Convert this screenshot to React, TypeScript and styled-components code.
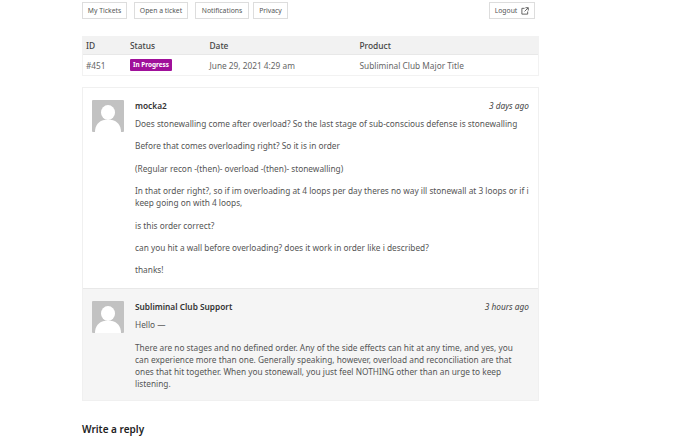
import React from "react";
import styled, { createGlobalStyle } from "styled-components";

const Global = createGlobalStyle`
  html, body { margin: 0; padding: 0; background: #fff; }
  body { font-family: "Noto Sans", sans-serif; color: #555; height: 437px; overflow: hidden; }
`;
const Page = styled.div`
  width: 457px;
  margin-left: 82px;
  padding-top: 2px;
`;
const Toolbar = styled.nav`
  display: flex;
  gap: 7px;
  height: 17px;
`;
const NavButton = styled.a<{ $width: number; $tight?: boolean }>`
  display: flex;
  align-items: center;
  justify-content: center;
  gap: 4px;
  width: ${(p) => p.$width}px;
  height: 17px;
  box-sizing: border-box;
  margin-left: ${(p) => (p.$tight ? "-3px" : "0")};
  border: 1px solid #ddd;
  background: #fff;
  font-size: 6.8px;
  color: #555;
`;
const LogoutButton = styled(NavButton)`
  margin-left: auto;
  margin-right: 4px;
`;
const Table = styled.div`
  margin-top: 17px;
  border: 1px solid #f2f2f2;
  border-top: 0;
`;
const Row = styled.div<{ $head?: boolean }>`
  display: grid;
  grid-template-columns: 44px 79.5px 150px 1fr;
  align-items: center;
  height: ${(p) => (p.$head ? "19px" : "20px")};
  padding: 0 0 0 3px;
  background: ${(p) => (p.$head ? "#f2f2f2" : "#fff")};
  border-bottom: ${(p) => (p.$head ? "1px solid #e8e8e8" : "0")};
  box-sizing: border-box;
  font-size: ${(p) => (p.$head ? "8.4px" : "8.3px")};
  font-weight: ${(p) => (p.$head ? 500 : 400)};
  color: ${(p) => (p.$head ? "#444" : "#666")};
`;
const Badge = styled.span`
  justify-self: start;
  background: #a0109a;
  color: #fff;
  font-size: 6.4px;
  font-weight: 700;
  line-height: 12px;
  padding: 0 3px;
  border-radius: 1px;
`;
const Thread = styled.section`
  margin-top: 11px;
  border: 1px solid #f0f0f0;
`;
const Message = styled.article<{ $alt?: boolean }>`
  display: grid;
  grid-template-columns: 32px 1fr;
  column-gap: 11px;
  padding: 12px 9px ${(p) => (p.$alt ? "10px" : "12px")} 9px;
  background: ${(p) => (p.$alt ? "#f5f5f5" : "#fff")};
  border-top: ${(p) => (p.$alt ? "1px solid #e8e8e8" : "0")};
`;
const Avatar = styled.svg`
  width: 32px;
  height: 32px;
  display: block;
`;
const Body = styled.div`
  min-width: 0;
  margin-top: -2px;
`;
const Meta = styled.header`
  display: flex;
  justify-content: space-between;
  align-items: center;
  height: 14px;
  margin-bottom: 6px;
`;
const Author = styled.span`
  font-size: 8.3px;
  font-weight: 600;
  color: #333;
`;
const When = styled.time`
  font-size: 8.3px;
  font-style: italic;
  color: #444;
`;
const Para = styled.p<{ $narrow?: boolean }>`
  margin: 0 0 10.4px;
  max-width: ${(p) => (p.$narrow ? "385px" : "none")};
  font-size: 8.3px;
  line-height: 12px;
  color: #555;
  &:last-child { margin-bottom: 0; }
`;
const ReplyTitle = styled.h3`
  margin: 22px 0 0;
  font-size: 10px;
  line-height: 12px;
  font-weight: 600;
  color: #222;
`;

function Av() {
  return (
    <Avatar viewBox="0 0 32 32">
      <rect width="32" height="32" rx="1" fill="#c2c2c2" />
      <ellipse cx="16" cy="12.500" rx="7" ry="7.500" fill="#fff" />
      <path d="M3 32c0-7 4-11 9-12h8c5 1 9 5 9 12z" fill="#fff" />
    </Avatar>
  );
}

export default function App() {
  return (
    <Page>
      <Global />
      <Toolbar>
        <NavButton $width={45}>My Tickets</NavButton>
        <NavButton $width={54}>Open a ticket</NavButton>
        <NavButton $width={54}>Notifications</NavButton>
        <NavButton $width={35} $tight>Privacy</NavButton>
        <LogoutButton $width={46}>
          Logout
          <svg width="8" height="8" viewBox="0 0 9 9" fill="none" stroke="#555" strokeWidth="1">
            <path d="M4 1.500H1v6.500h6.500V5M5 .8h3.200V4M8 1 4 5" />
          </svg>
        </LogoutButton>
      </Toolbar>
      <Table>
        <Row $head>
          <span>ID</span><span>Status</span><span>Date</span><span>Product</span>
        </Row>
        <Row>
          <span>#451</span><Badge>In Progress</Badge><span>June 29, 2021 4:29 am</span><span>Subliminal Club Major Title</span>
        </Row>
      </Table>
      <Thread>
        <Message>
          <Av />
          <Body>
            <Meta><Author>mocka2</Author><When>3 days ago</When></Meta>
            <Para>Does stonewalling come after overload? So the last stage of sub-conscious defense is stonewalling</Para>
            <Para>Before that comes overloading right? So it is in order</Para>
            <Para>(Regular recon -(then)- overload -(then)- stonewalling)</Para>
            <Para>In that order right?, so if im overloading at 4 loops per day theres no way ill stonewall at 3 loops or if i keep going on with 4 loops,</Para>
            <Para>is this order correct?</Para>
            <Para>can you hit a wall before overloading? does it work in order like i described?</Para>
            <Para>thanks!</Para>
          </Body>
        </Message>
        <Message $alt>
          <Av />
          <Body>
            <Meta><Author>Subliminal Club Support</Author><When>3 hours ago</When></Meta>
            <Para>Hello —</Para>
            <Para $narrow>There are no stages and no defined order. Any of the side effects can hit at any time, and yes, you can experience more than one. Generally speaking, however, overload and reconciliation are that ones that hit together. When you stonewall, you just feel NOTHING other than an urge to keep listening.</Para>
          </Body>
        </Message>
      </Thread>
      <ReplyTitle>Write a reply</ReplyTitle>
    </Page>
  );
}
